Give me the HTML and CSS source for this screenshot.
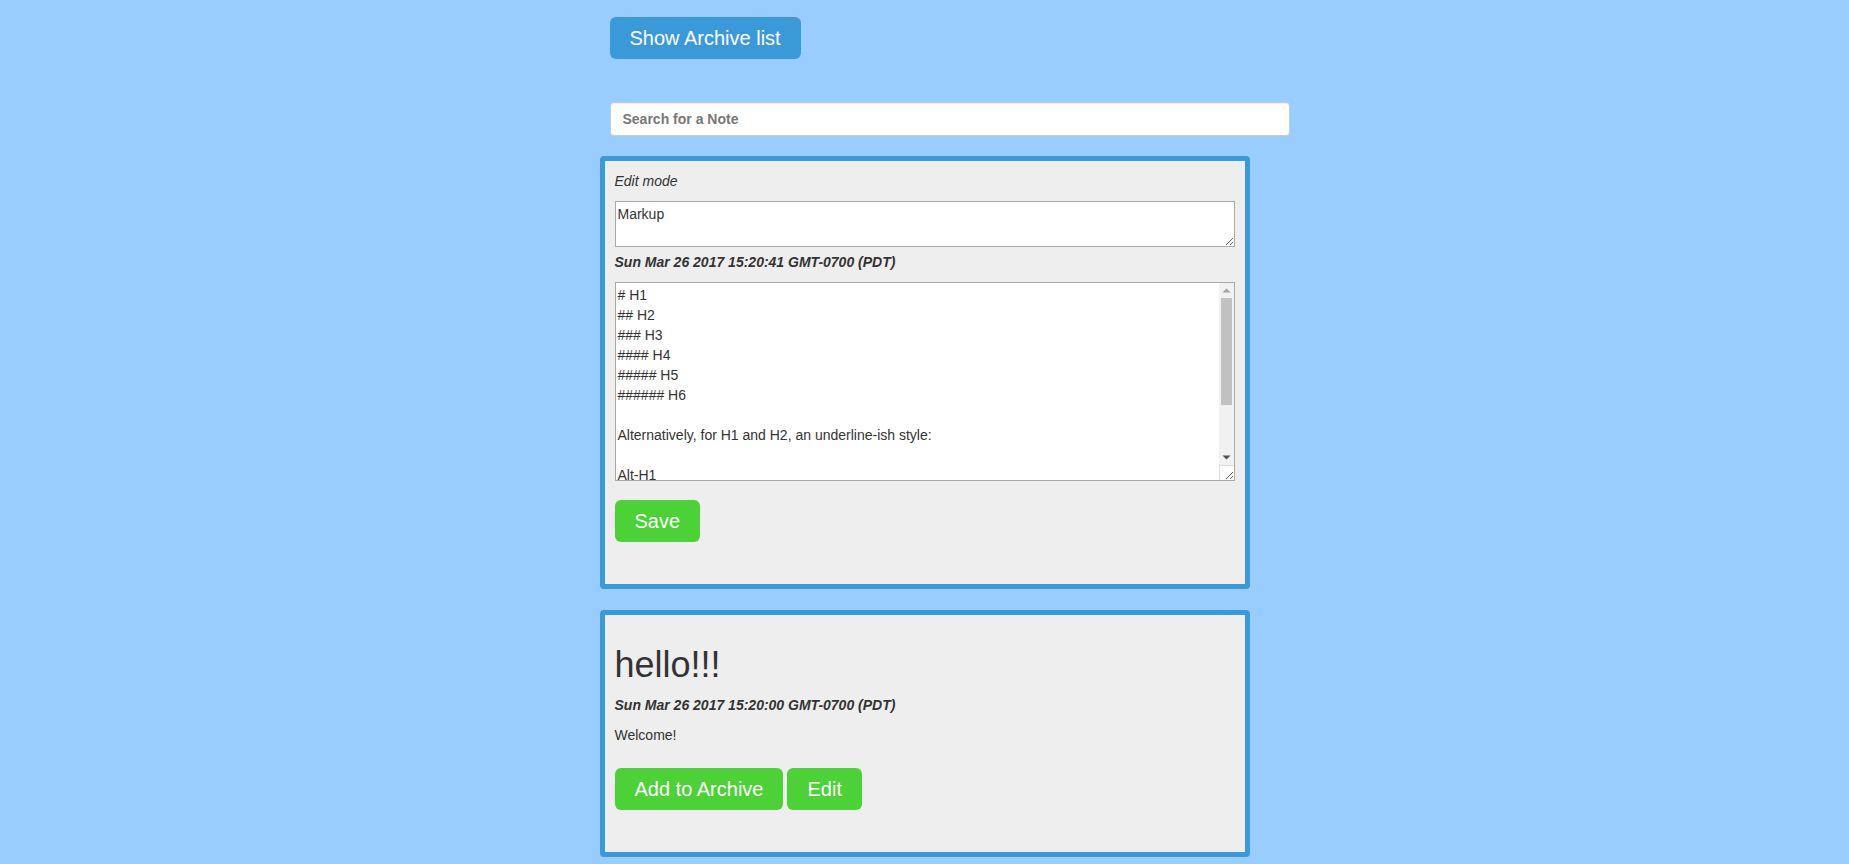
FILE: index.html
```html
<!DOCTYPE html>
<html lang="en">
<head>
<meta charset="utf-8">
<title>Notes</title>
<link rel="stylesheet" href="styles.css">
</head>
<body>
<div class="page">
  <div class="top">
    <button class="btn btn-blue" type="button">Show Archive list</button>
    <input class="search" type="text" placeholder="Search for a Note">
  </div>

  <div class="card">
    <p class="mode">Edit mode</p>
    <textarea class="field title-field">Markup</textarea>
    <p class="date">Sun Mar 26 2017 15:20:41 GMT-0700 (PDT)</p>
    <div class="editor-wrap">
      <textarea class="field body-field"># H1
## H2
### H3
#### H4
##### H5
###### H6

Alternatively, for H1 and H2, an underline-ish style:

Alt-H1
======

Alt-H2
------</textarea>
      <div class="sb" aria-hidden="true">
        <div class="sb-btn">
          <svg width="15" height="15" viewBox="0 0 15 15"><polygon points="3.5,9.5 7.5,5.5 11.5,9.5" fill="#a3a3a3"/></svg>
        </div>
        <div class="sb-track"><div class="sb-thumb"></div></div>
        <div class="sb-btn">
          <svg width="15" height="15" viewBox="0 0 15 15"><polygon points="3.5,5.5 11.5,5.5 7.5,9.5" fill="#505050"/></svg>
        </div>
      </div>
      <div class="sb-corner" aria-hidden="true"></div>
    </div>
    <div class="actions">
      <button class="btn btn-green" type="button">Save</button>
    </div>
  </div>

  <div class="card card-gap">
    <h1 class="note-title">hello!!!</h1>
    <p class="date">Sun Mar 26 2017 15:20:00 GMT-0700 (PDT)</p>
    <p class="text">Welcome!</p>
    <div class="actions actions-view">
      <button class="btn btn-green" type="button">Add to Archive</button>
      <button class="btn btn-green" type="button">Edit</button>
    </div>
  </div>
</div>
</body>
</html>
```
FILE: styles.css
```css
html, body {
  margin: 0;
  padding: 0;
}
body {
  background: #99ccff;
  font-family: "Liberation Sans", Arial, Helvetica, sans-serif;
  font-size: 14px;
  line-height: 20px;
  color: #333;
}
.page {
  width: 650px;
  margin: 0 auto;
  padding-top: 17px;
}
.top {
  padding-left: 10px;
  display: flex;
  flex-direction: column;
  align-items: flex-start;
}
.btn {
  font-family: "Liberation Sans", Arial, Helvetica, sans-serif;
  font-size: 20px;
  line-height: 22px;
  padding: 10px 20px;
  border: none;
  border-radius: 6px;
  color: #fff;
  cursor: pointer;
  margin: 0;
}
.btn-blue {
  background: #3a99d8;
}
.btn-green {
  background: #4cd137;
}
.search {
  box-sizing: border-box;
  margin-top: 43px;
  width: 680px;
  height: 34px;
  padding: 6px 12px;
  border: 1px solid #ccc;
  border-radius: 4px;
  background: #fff;
  box-shadow: inset 0 1px 1px rgba(0,0,0,0.075);
  font-family: "Liberation Sans", Arial, Helvetica, sans-serif;
  font-size: 14px;
  font-weight: bold;
  color: #555;
  outline: none;
}
.search::placeholder {
  color: #777;
  font-weight: bold;
}
.card {
  box-sizing: border-box;
  width: 650px;
  margin-top: 20px;
  background: #eeeeee;
  border: 5px solid #3a99d8;
  border-radius: 4px;
  padding: 10px;
}
.card-gap {
  margin-top: 21px;
}
.mode {
  margin: 0 0 10px;
  font-style: italic;
}
.date {
  margin: 0 0 10px;
  font-style: italic;
  font-weight: bold;
}
.text {
  margin: 0;
}
.field {
  display: block;
  box-sizing: border-box;
  width: 100%;
  margin: 0;
  padding: 2px;
  border: 1px solid #a9a9a9;
  background: #fff;
  font-family: "Liberation Sans", Arial, Helvetica, sans-serif;
  font-size: 14px;
  line-height: 20px;
  color: #333;
  outline: none;
}
.title-field {
  height: 46px;
  margin-bottom: 5px;
}
.editor-wrap {
  position: relative;
}
.body-field {
  height: 199px;
  overflow: hidden;
  padding-right: 18px;
}
.sb {
  position: absolute;
  top: 1px;
  right: 1px;
  bottom: 16px;
  width: 15px;
  background: #f1f1f1;
  display: flex;
  flex-direction: column;
}
.sb-btn {
  height: 15px;
  flex: 0 0 15px;
}
.sb-btn svg {
  display: block;
}
.sb-track {
  flex: 1;
}
.sb-thumb {
  height: 107px;
  margin: 0 2px;
  background: #c1c1c1;
}
.sb-corner {
  position: absolute;
  right: 1px;
  bottom: 1px;
  width: 15px;
  height: 15px;
  box-sizing: border-box;
  border-top: 1px solid #dcdcdc;
  border-left: 1px solid #dcdcdc;
  pointer-events: none;
}
.actions {
  display: flex;
  gap: 4px;
  margin: 19px 0 32px;
}
.actions-view {
  margin-top: 23px;
}
.note-title {
  font-size: 36px;
  font-weight: 500;
  line-height: 1.1;
  margin: 20px 0 10px;
  color: #333;
}
```
